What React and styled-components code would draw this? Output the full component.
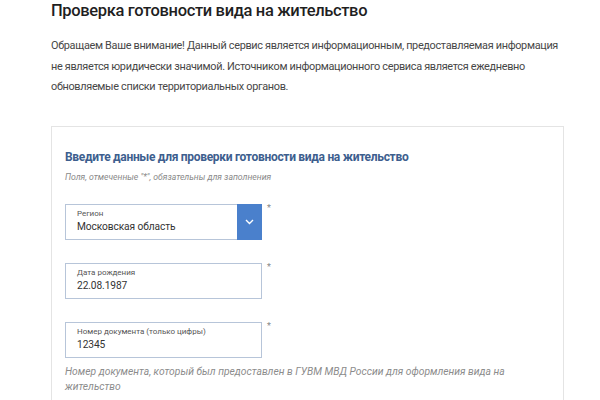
import styled, { createGlobalStyle } from "styled-components";

const GlobalStyle = createGlobalStyle`
  html, body {
    margin: 0;
    background: #fff;
    font-family: Roboto, "Noto Sans", sans-serif;
  }
`;

const Page = styled.div`
  height: 400px;
  overflow: hidden;
  padding: 0 36px 0 51px;
`;

const Title = styled.h1`
  margin: 0;
  font-size: 16.5px;
  line-height: 22px;
  font-weight: 500;
  letter-spacing: -0.35px;
  color: #1f1f1f;
`;

const Notice = styled.p`
  margin: 14px 0 0;
  font-size: 10.9px;
  line-height: 20.5px;
  letter-spacing: -0.32px;
  color: #474747;
`;

const Card = styled.div`
  margin-top: 28px;
  border: 1px solid #e4e4e4;
  padding: 22px 13px 0;
  height: 300px;
`;

const CardTitle = styled.h2`
  margin: 0;
  font-size: 12px;
  line-height: 16px;
  font-weight: 700;
  letter-spacing: -0.3px;
  color: #3d5e8e;
`;

const Required = styled.div`
  margin-top: 6px;
  font-size: 8.7px;
  line-height: 12px;
  font-style: italic;
  color: #8a8a8a;
`;

const Form = styled.div`
  margin-top: 21px;
  display: flex;
  flex-direction: column;
  gap: 23px;
`;

const FieldRow = styled.div`
  display: flex;
  align-items: flex-start;
`;

const Field = styled.div`
  width: 197px;
  height: 36px;
  box-sizing: border-box;
  border: 1px solid #b7c5d9;
  display: flex;
`;

const FieldBody = styled.div`
  flex: 1;
  padding: 4px 0 0 11px;
`;

const Label = styled.div`
  font-size: 8px;
  line-height: 10px;
  color: #555;
`;

const Value = styled.div`
  font-size: 10.2px;
  line-height: 16px;
  letter-spacing: -0.1px;
  color: #333;
`;

const DropButton = styled.div`
  width: 25px;
  margin: -1px -1px -1px 0;
  background: #4a80cc;
  display: flex;
  align-items: center;
  justify-content: center;
`;

const Star = styled.span`
  margin-left: 5px;
  font-size: 9px;
  line-height: 9px;
  color: #888;
`;

const Hint = styled.div`
  margin-top: 6px;
  width: 450px;
  font-size: 10.3px;
  line-height: 15px;
  font-style: italic;
  color: #8c8c8c;
`;

function Chevron() {
  return (
    <svg width="9" height="6" viewBox="0 0 9 6">
      <polyline
        points="1,1 4.5,4.5 8,1"
        fill="none"
        stroke="#fff"
        strokeWidth="1.4"
      />
    </svg>
  );
}

function InputField({ label, value, select }) {
  return (
    <FieldRow>
      <Field>
        <FieldBody>
          <Label>{label}</Label>
          <Value>{value}</Value>
        </FieldBody>
        {select && (
          <DropButton>
            <Chevron />
          </DropButton>
        )}
      </Field>
      <Star>*</Star>
    </FieldRow>
  );
}

export default function App() {
  return (
    <>
      <GlobalStyle />
      <Page>
        <Title>Проверка готовности вида на жительство</Title>
        <Notice>
          Обращаем Ваше внимание! Данный сервис является информационным,
          предоставляемая информация не является юридически значимой.
          Источником информационного сервиса является ежедневно обновляемые
          списки территориальных органов.
        </Notice>
        <Card>
          <CardTitle>
            Введите данные для проверки готовности вида на жительство
          </CardTitle>
          <Required>
            Поля, отмеченные "*", обязательны для заполнения
          </Required>
          <Form>
            <InputField label="Регион" value="Московская область" select />
            <InputField label="Дата рождения" value="22.08.1987" />
            <div>
              <InputField
                label="Номер документа (только цифры)"
                value="12345"
              />
              <Hint>
                Номер документа, который был предоставлен в ГУВМ МВД России
                для оформления вида на жительство
              </Hint>
            </div>
          </Form>
        </Card>
      </Page>
    </>
  );
}
